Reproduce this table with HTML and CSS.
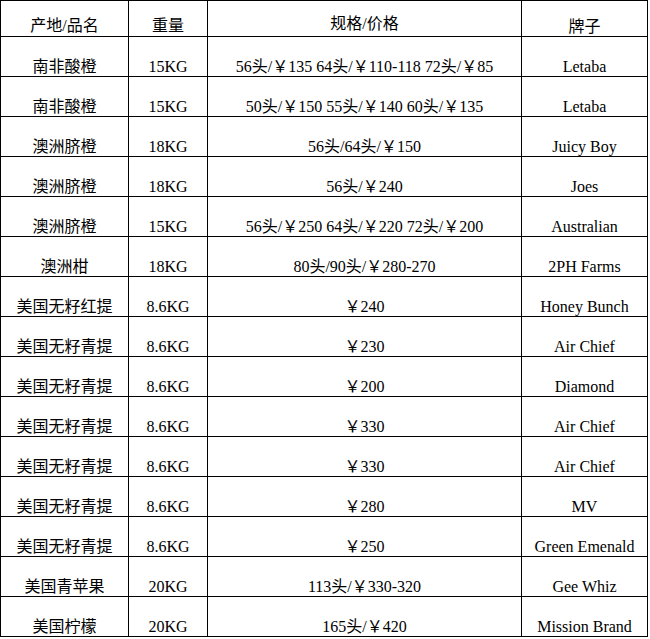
FILE: index.html
```html
<!DOCTYPE html>
<html lang="zh">
<head>
<meta charset="utf-8">
<title>价格表</title>
<link rel="stylesheet" href="styles.css">
</head>
<body>
<div class="sheet">
  <div class="cell head">产地/品名</div>
  <div class="cell head">重量</div>
  <div class="cell head spec">规格/价格</div>
  <div class="cell head brand">牌子</div>

  <div class="cell">南非酸橙</div><div class="cell">15KG</div><div class="cell">56头/￥135 64头/￥110-118 72头/￥85</div><div class="cell">Letaba</div>
  <div class="cell">南非酸橙</div><div class="cell">15KG</div><div class="cell">50头/￥150 55头/￥140 60头/￥135</div><div class="cell">Letaba</div>
  <div class="cell">澳洲脐橙</div><div class="cell">18KG</div><div class="cell">56头/64头/￥150</div><div class="cell">Juicy Boy</div>
  <div class="cell">澳洲脐橙</div><div class="cell">18KG</div><div class="cell">56头/￥240</div><div class="cell">Joes</div>
  <div class="cell">澳洲脐橙</div><div class="cell">15KG</div><div class="cell">56头/￥250 64头/￥220 72头/￥200</div><div class="cell">Australian</div>
  <div class="cell">澳洲柑</div><div class="cell">18KG</div><div class="cell">80头/90头/￥280-270</div><div class="cell">2PH Farms</div>
  <div class="cell">美国无籽红提</div><div class="cell">8.6KG</div><div class="cell">￥240</div><div class="cell">Honey Bunch</div>
  <div class="cell">美国无籽青提</div><div class="cell">8.6KG</div><div class="cell">￥230</div><div class="cell">Air Chief</div>
  <div class="cell">美国无籽青提</div><div class="cell">8.6KG</div><div class="cell">￥200</div><div class="cell">Diamond</div>
  <div class="cell">美国无籽青提</div><div class="cell">8.6KG</div><div class="cell">￥330</div><div class="cell">Air Chief</div>
  <div class="cell">美国无籽青提</div><div class="cell">8.6KG</div><div class="cell">￥330</div><div class="cell">Air Chief</div>
  <div class="cell">美国无籽青提</div><div class="cell">8.6KG</div><div class="cell">￥280</div><div class="cell">MV</div>
  <div class="cell">美国无籽青提</div><div class="cell">8.6KG</div><div class="cell">￥250</div><div class="cell">Green Emenald</div>
  <div class="cell">美国青苹果</div><div class="cell">20KG</div><div class="cell">113头/￥330-320</div><div class="cell">Gee Whiz</div>
  <div class="cell">美国柠檬</div><div class="cell">20KG</div><div class="cell">165头/￥420</div><div class="cell">Mission Brand</div>
</div>
</body>
</html>
```
FILE: styles.css
```css
html, body {
  margin: 0;
  padding: 0;
  background: #ffffff;
}

.sheet {
  display: grid;
  grid-template-columns: 128px 79px 314px 126px;
  grid-template-rows: 36px;
  grid-auto-rows: 40px;
  width: max-content;
  border-top: 1px solid #000;
  border-left: 1px solid #000;
  font-family: "Liberation Serif", "Noto Sans CJK SC", serif;
  font-size: 16px;
  line-height: 18px;
  color: #000;
}

.cell {
  box-sizing: border-box;
  border-right: 1px solid #000;
  border-bottom: 1px solid #000;
  display: flex;
  align-items: flex-end;
  justify-content: center;
  white-space: nowrap;
}

.head {
  padding-bottom: 1px;
}

.head.spec {
  padding-bottom: 3px;
}

.head.brand {
  padding-bottom: 0;
}
```
